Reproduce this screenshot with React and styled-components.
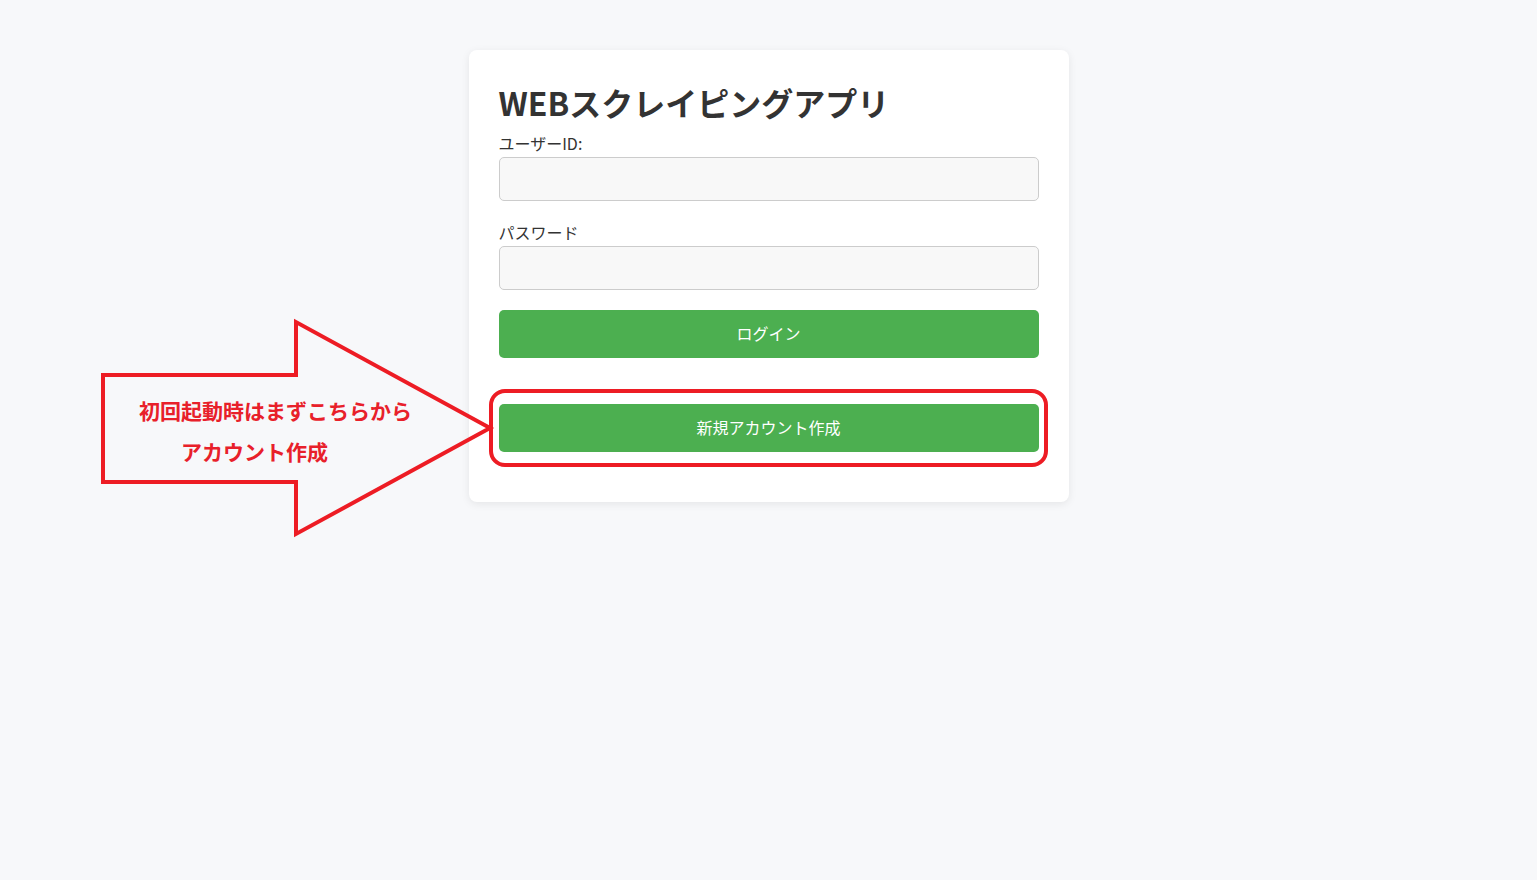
import React from "react";
import styled, { createGlobalStyle } from "styled-components";

const Global = createGlobalStyle`
  html, body { margin: 0; padding: 0; }
  body {
    background: #f7f8fa;
    font-family: "Noto Sans CJK JP", "Noto Sans", "Liberation Sans", sans-serif;
    color: #333;
  }
  * { box-sizing: border-box; }
`;

const Page = styled.div`
  position: relative;
  width: 100%;
  min-height: 880px;
  padding-top: 50px;
`;

const Card = styled.div`
  width: 600px;
  margin: 0 auto;
  background: #fff;
  border-radius: 8px;
  box-shadow: 0 2px 8px rgba(0, 0, 0, 0.08);
  padding: 30px;
  display: flex;
  flex-direction: column;
`;

const Title = styled.h1`
  margin: 4px 0 14px;
  font-size: 32px;
  line-height: 36px;
  font-weight: 700;
  color: #333;
  letter-spacing: 0;
`;

const Label = styled.label`
  display: block;
  font-size: 16px;
  line-height: 19px;
  margin-bottom: 4px;
  color: #333;
`;

const Input = styled.input`
  display: block;
  width: 100%;
  height: 44px;
  border: 1px solid #ccc;
  border-radius: 5px;
  background: #f8f8f8;
  margin: 0 0 ${(p) => p.$mb}px;
  font-size: 16px;
  padding: 0 10px;
  outline: none;
`;

const Button = styled.button`
  display: block;
  width: 100%;
  height: 48px;
  border: none;
  border-radius: 5px;
  background: #4caf50;
  color: #fff;
  font-family: inherit;
  font-size: 16px;
  padding: 0 0 3px;
  margin-top: ${(p) => p.$mt}px;
  margin-bottom: ${(p) => p.$mb || 0}px;
  cursor: pointer;
`;

const Overlay = styled.svg`
  position: absolute;
  left: 0;
  top: 0;
  pointer-events: none;
`;

const Note = styled.div`
  position: absolute;
  left: ${(p) => p.$x}px;
  top: ${(p) => p.$y}px;
  font-size: 21px;
  line-height: 24px;
  font-weight: 700;
  color: #e8202a;
  white-space: nowrap;
`;

export default function App() {
  return (
    <>
      <Global />
      <Page>
        <Card>
          <Title>WEBスクレイピングアプリ</Title>
          <Label>ユーザーID:</Label>
          <Input type="text" $mb={22} />
          <Label>パスワード</Label>
          <Input type="password" $mb={0} />
          <Button $mt={20}>ログイン</Button>
          <Button $mt={46} $mb={20}>新規アカウント作成</Button>
        </Card>
        <Overlay width="1537" height="880" viewBox="0 0 1537 880">
          <polygon
            points="103,375 296,375 296,322 490,428 296,534 296,482 103,482"
            fill="none"
            stroke="#ed1c24"
            strokeWidth="4"
            strokeLinejoin="miter"
          />
          <rect
            x="491"
            y="391"
            width="555"
            height="74"
            rx="14"
            ry="14"
            fill="none"
            stroke="#ed1c24"
            strokeWidth="4"
          />
        </Overlay>
        <Note $x={139} $y={398}>初回起動時はまずこちらから</Note>
        <Note $x={181} $y={439}>アカウント作成</Note>
      </Page>
    </>
  );
}
